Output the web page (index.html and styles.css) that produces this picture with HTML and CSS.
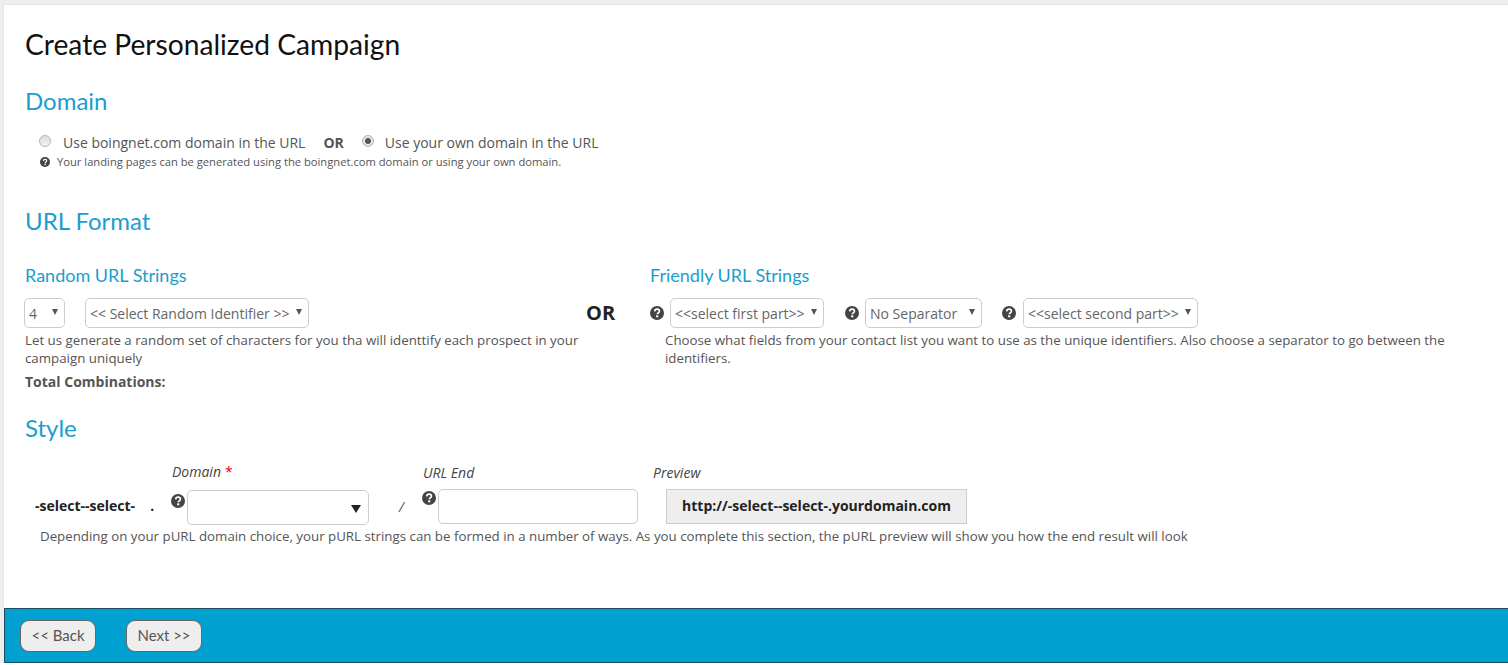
FILE: index.html
```html
<!DOCTYPE html>
<html lang="en">
<head>
    <meta charset="UTF-8" />
    <title>Create Personalized Campaign</title>
    <link rel="stylesheet" href="styles.css">
</head>
<body>
    <svg class="icon-defs" width="0" height="0" aria-hidden="true">
        <symbol id="help" viewBox="0 0 14 14">
            <circle cx="7" cy="7" r="7" fill="#444"/>
            <path d="M4.7 5.4C4.8 4 5.8 3.2 7.1 3.2c1.3 0 2.3.8 2.3 2 0 1.6-2.1 1.7-2.1 3.1" fill="none" stroke="#fff" stroke-width="1.7"/>
            <rect x="6.2" y="9.3" width="2.1" height="2" fill="#fff"/>
        </symbol>
    </svg>
    <div class="page">
        <main class="content">
            <h1>Create Personalized Campaign</h1>

            <h2 class="section-title domain-title">Domain</h2>
            <div class="domain-options">
                <label class="radio-label"><input type="radio" name="domain" /> Use boingnet.com domain in the URL</label>
                <strong class="domain-or">OR</strong>
                <label class="radio-label"><input type="radio" name="domain" checked /> Use your own domain in the URL</label>
            </div>
            <p class="domain-help"><svg class="help-icon small"><use href="#help"/></svg>Your landing pages can be generated using the boingnet.com domain or using your own domain.</p>

            <h2 class="section-title format-title">URL Format</h2>
            <div class="format-row">
                <section class="random-col">
                    <h3>Random URL Strings</h3>
                    <div class="select-row">
                        <div class="select-box count-select">
                            <select><option>4</option></select>
                        </div>
                        <div class="select-box identifier-select">
                            <select><option>&lt;&lt; Select Random Identifier &gt;&gt;</option></select>
                        </div>
                    </div>
                    <p class="desc">Let us generate a random set of characters for you tha will identtify each prospect in your campaign uniquely</p>
                    <p class="total">Total Combinations:</p>
                </section>
                <div class="format-or">OR</div>
                <section class="friendly-col">
                    <h3>Friendly URL Strings</h3>
                    <div class="select-row">
                        <svg class="help-icon"><use href="#help"/></svg>
                        <div class="select-box first-select">
                            <select><option>&lt;&lt;select first part&gt;&gt;</option></select>
                        </div>
                        <svg class="help-icon next"><use href="#help"/></svg>
                        <div class="select-box separator-select">
                            <select><option>No Separator</option></select>
                        </div>
                        <svg class="help-icon next"><use href="#help"/></svg>
                        <div class="select-box second-select">
                            <select><option>&lt;&lt;select second part&gt;&gt;</option></select>
                        </div>
                    </div>
                    <p class="desc friendly-desc">Choose what fields from your contact list you want to use as the unique identifiers. Also choose a separator to go between the identifiers.</p>
                </section>
            </div>

            <h2 class="section-title style-title">Style</h2>
            <div class="style-row">
                <div class="style-prefix"><b>-select--select-</b><b class="dot">.</b></div>
                <div class="style-field domain-field">
                    <div class="field-label">Domain<span class="required">*</span></div>
                    <div class="field-body">
                        <svg class="help-icon"><use href="#help"/></svg>
                        <div class="select-box domain-select">
                            <select><option></option></select>
                        </div>
                    </div>
                </div>
                <div class="slash">/</div>
                <div class="style-field url-field">
                    <div class="field-label">URL End</div>
                    <div class="field-body">
                        <svg class="help-icon"><use href="#help"/></svg>
                        <input type="text" class="url-input" />
                    </div>
                </div>
                <div class="style-field preview-field">
                    <div class="field-label">Preview</div>
                    <div class="preview-box">http://-select--select-.yourdomain.com</div>
                </div>
            </div>
            <p class="desc style-desc">Depending on your pURL domain choice, your pURL strings can be formed in a number of ways. As you complete this section, the pURL preview will show you how the end result will look</p>
        </main>
        <footer class="footer-bar">
            <button>&lt;&lt; Back</button>
            <button>Next &gt;&gt;</button>
        </footer>
    </div>
</body>
</html>
```

FILE: styles.css
```css
* {
    box-sizing: border-box;
}
html, body {
    height: 100%;
}
body {
    margin: 0;
    background: #fff;
    font-family: 'Open Sans', sans-serif;
    font-size: 13.3px;
    color: #555;
    overflow: hidden;
}
.icon-defs {
    display: block;
    height: 0;
}
.page {
    height: 663px;
    padding: 4px 0 0 3px;
    background: #eee;
    display: flex;
    flex-direction: column;
}
.content {
    flex: 1;
    background: #fff;
    padding: 0 21px;
    border-left: 1px solid #e4e4e4;
    border-top: 1px solid #e4e4e4;
}
h1 {
    margin: 0;
    padding-top: 21px;
    font-family: Lato, sans-serif;
    font-weight: 400;
    font-size: 28.2px;
    line-height: 36px;
    color: #111;
}
.section-title {
    margin: 0;
    font-family: Lato, sans-serif;
    font-weight: 400;
    font-size: 24px;
    line-height: 30px;
    color: #1b9dd0;
}
.domain-title {
    margin-top: 24px;
}
.format-title {
    margin-top: 37px;
}
.style-title {
    margin-top: 22px;
}
h3 {
    margin: 0;
    font-family: Lato, sans-serif;
    font-weight: 400;
    font-size: 18px;
    line-height: 22px;
    color: #1b9dd0;
}

/* domain radios */
.domain-options {
    display: flex;
    align-items: center;
    margin-top: 16px;
    padding-left: 14px;
    height: 20px;
    font-size: 14px;
}
.radio-label {
    display: flex;
    align-items: center;
}
.radio-label input {
    appearance: none;
    width: 12px;
    height: 12px;
    margin: -3px 12px 0 0;
    border: 1px solid #b5b5b5;
    border-radius: 50%;
    background: linear-gradient(#ddd, #f2f2f2);
}
.radio-label input:checked {
    background: radial-gradient(circle, #555 0, #555 2.5px, #e4e4e4 3.5px);
    margin-right: 11px;
}
.domain-or {
    margin: 0 18px;
}
.domain-help {
    display: flex;
    align-items: center;
    margin: 1px 0 0;
    padding-left: 15px;
    height: 16px;
    font-size: 11.2px;
}
.help-icon {
    width: 14px;
    height: 14px;
    flex: none;
}
.help-icon.small {
    width: 10px;
    height: 10px;
    margin: 2px 7px 0 0;
}

/* url format */
.format-row {
    display: flex;
    margin-top: 28px;
}
.random-col {
    width: 561px;
}
.format-or {
    width: 64px;
    margin-top: 37px;
    font-size: 20px;
    font-weight: 700;
    line-height: 24px;
    color: #222;
}
.friendly-col {
    flex: 1;
}
.select-row {
    display: flex;
    align-items: center;
    margin-top: 12px;
    height: 30px;
}
.select-box {
    position: relative;
    height: 30px;
}
.select-box::after {
    content: "";
    position: absolute;
    top: 11px;
    right: 7px;
    border-style: solid;
    border-width: 6px 3px 0 3px;
    border-color: #555 transparent transparent transparent;
    pointer-events: none;
}
.select-box select {
    appearance: none;
    display: block;
    width: 100%;
    height: 100%;
    padding: 0 0 0 4px;
    border: 1px solid #ccc;
    border-radius: 5px;
    background: #fff;
    font-family: 'Open Sans', sans-serif;
    font-size: 14px;
    color: #666;
}
.count-select {
    width: 41px;
    margin-left: -1px;
}
.identifier-select {
    width: 224px;
    margin-left: 20px;
}
.first-select {
    width: 154px;
    margin-left: 6px;
}
.separator-select {
    width: 117px;
    margin-left: 6px;
    margin-right: -1px;
}
.second-select {
    width: 175px;
    margin-left: 7px;
}
.help-icon.next {
    margin-left: 21px;
}
.desc {
    margin: 3px 0 0;
    line-height: 18px;
}
.friendly-desc {
    padding-left: 15px;
    padding-right: 30px;
}
.total {
    margin: 6px 0 0;
    font-size: 14px;
    font-weight: 700;
    line-height: 18px;
}

/* style row */
.style-row {
    display: flex;
    align-items: flex-start;
    margin-top: 20px;
}
.style-prefix {
    display: flex;
    width: 147px;
    margin-top: 33px;
    padding-left: 10px;
    font-size: 14px;
    line-height: 20px;
    color: #222;
}
.dot {
    margin-left: 15px;
}
.field-label {
    font-style: italic;
    font-size: 14px;
    line-height: 18px;
    color: #444;
}
.required {
    color: #e00;
    font-style: normal;
    margin-left: 4px;
}
.field-body {
    display: flex;
    align-items: flex-start;
}
.domain-field {
    width: 198px;
}
.domain-field .field-label {
    padding-bottom: 9px;
}
.domain-field .help-icon {
    margin: 4px 2px 0 -1px;
}
.domain-select {
    width: 182px;
    height: 35px;
}
.domain-select::after {
    top: 15px;
    right: 8px;
    border-width: 8px 5px 0 5px;
    border-color: #222 transparent transparent transparent;
}
.slash {
    width: 23px;
    margin-left: 29px;
    margin-top: 34px;
    font-style: italic;
    font-size: 14px;
    line-height: 20px;
}
.url-field {
    width: 231px;
}
.url-field .field-label {
    padding-top: 1px;
    padding-left: 1px;
    padding-bottom: 7px;
}
.url-field .help-icon {
    margin: 2px 2px 0 0;
}
.url-input {
    width: 200px;
    height: 35px;
    border: 1px solid #ccc;
    border-radius: 5px;
}
.preview-field .field-label {
    padding-top: 1px;
    padding-bottom: 7px;
}
.preview-box {
    width: 301px;
    height: 35px;
    margin-left: 13px;
    border: 1px solid #ccc;
    background: #eee;
    font-size: 14px;
    font-weight: 700;
    line-height: 31px;
    text-align: center;
    color: #222;
}
.style-desc {
    margin-top: 2px;
    padding-left: 15px;
}

/* bottom bar */
.footer-bar {
    display: flex;
    align-items: center;
    gap: 30px;
    height: 55px;
    margin-left: 1px;
    padding: 0 0 0 15px;
    background: #00a0d0;
    border: 1px solid #1d4f63;
    border-right: 0;
}
.footer-bar button {
    width: 76px;
    height: 32px;
    padding: 0 0 2px;
    border: 1px solid #666;
    border-radius: 9px;
    background: #eee;
    font-family: Lato, sans-serif;
    font-size: 15px;
    color: #555;
}
```
